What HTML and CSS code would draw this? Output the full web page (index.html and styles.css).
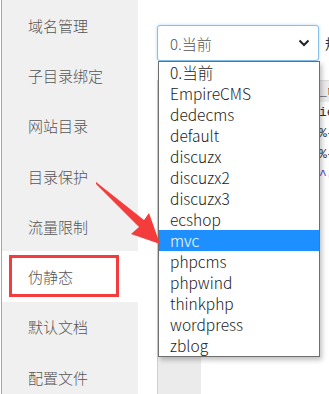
FILE: index.html
```html
<!DOCTYPE html>
<html lang="zh">
<head>
<meta charset="utf-8">
<link rel="stylesheet" href="styles.css">
</head>
<body>
<div class="page">
  <ul class="sidebar">
    <li class="nav-item">域名管理</li>
    <li class="nav-item">子目录绑定</li>
    <li class="nav-item">网站目录</li>
    <li class="nav-item">目录保护</li>
    <li class="nav-item">流量限制</li>
    <li class="nav-item active">伪静态</li>
    <li class="nav-item">默认文档</li>
    <li class="nav-item">配置文件</li>
  </ul>
  <div class="main">
    <div class="select-row">
      <div class="select">
        <span class="select-value">0.当前</span>
        <svg class="chevron" width="12" height="8" viewBox="0 0 12 8"><path d="M1.5 1.5 L6 6 L10.5 1.5" fill="none" stroke="#222" stroke-width="2"/></svg>
      </div>
      <span class="select-label">规则转换工具</span>
    </div>
    <div class="editor">
      <div class="gutter"></div>
      <div class="code">
        <div class="line current">_rewrite</div>
        <div class="line">ie</div>
        <div class="line">%{REQUEST}</div>
        <div class="line">%{HTTP}</div>
        <div class="line rx">^(.*)$</div>
      </div>
    </div>
    <ul class="dropdown">
      <li class="opt">0.当前</li>
      <li class="opt">EmpireCMS</li>
      <li class="opt">dedecms</li>
      <li class="opt">default</li>
      <li class="opt">discuzx</li>
      <li class="opt">discuzx2</li>
      <li class="opt">discuzx3</li>
      <li class="opt">ecshop</li>
      <li class="opt selected">mvc</li>
      <li class="opt">phpcms</li>
      <li class="opt">phpwind</li>
      <li class="opt">thinkphp</li>
      <li class="opt">wordpress</li>
      <li class="opt">zblog</li>
    </ul>
  </div>
  <div class="mark-box"></div>
  <svg class="arrow" width="329" height="394" viewBox="0 0 329 394">
    <polygon points="96,182 144,220 149,213 160,244 131,234 139,227 96,184" fill="#f43c3c"/>
  </svg>
</div>
</body>
</html>
```
FILE: styles.css
```css
* { box-sizing: border-box; }
html, body { margin: 0; padding: 0; background: #fff; }
body {
  width: 329px;
  height: 394px;
  overflow: hidden;
  font-family: "Noto Sans CJK SC", "Noto Sans", sans-serif;
}
.page {
  position: relative;
  display: flex;
  width: 329px;
  height: 394px;
  overflow: hidden;
}
.sidebar {
  list-style: none;
  margin: 0 0 0 1px;
  padding: 0;
  width: 137px;
  flex: none;
  background: #f0f0f0;
  border-left: 1px solid #a8a8a8;
}
.nav-item {
  height: 50.3px;
  display: flex;
  align-items: center;
  padding-left: 26px;
  font-size: 15px;
  font-weight: 300;
  color: #555;
}
.nav-item.active { background: #fff; }
.main {
  position: relative;
  flex: 1;
  padding: 25px 0 0 19px;
  min-width: 0;
}
.select-row {
  display: flex;
  align-items: center;
  white-space: nowrap;
}
.select {
  flex: none;
  width: 162px;
  height: 36px;
  border: 1px solid #86bfe9;
  border-radius: 3px;
  box-shadow: 0 0 3px rgba(102, 175, 233, 0.5);
  display: flex;
  align-items: center;
  justify-content: space-between;
  padding: 0 8px 0 12px;
  background: #fff;
}
.select-value { font-size: 15px; font-weight: 300; color: #555; }
.chevron { display: block; }
.select-label {
  margin-left: 6px;
  font-size: 14px;
  color: #333;
}
.editor {
  margin-top: 19px;
  display: flex;
  height: 320px;
  border-left: 1px solid #d0d0d0;
  border-top: 1px solid #ddd;
}
.gutter {
  width: 43px;
  flex: none;
  background: #ebebeb;
}
.code {
  flex: 1;
  min-width: 0;
  overflow: hidden;
  font-family: "Liberation Mono", monospace;
  font-size: 13px;
  color: #333;
}
.line {
  height: 21px;
  line-height: 21px;
  white-space: nowrap;
  padding-left: 118px;
}
.line.current { background: #ececec; }
.line.rx { color: #4a4ad0; }
.dropdown {
  position: absolute;
  left: 1px;
  top: 61px;
  width: 162px;
  margin: 0 0 0 19px;
  padding: 0;
  list-style: none;
  background: #fff;
  border: 1px solid #6e6e6e;
  box-shadow: 2px 3px 5px rgba(0, 0, 0, 0.25);
}
.opt {
  height: 21px;
  line-height: 21px;
  padding-left: 11px;
  font-size: 15.5px;
  font-weight: 300;
  color: #1a1a1a;
}
.opt.selected { background: #1e8fff; color: #fff; }
.mark-box {
  position: absolute;
  left: 9px;
  top: 255px;
  width: 110px;
  height: 42px;
  border: 3px solid #f43c3c;
}
.arrow {
  position: absolute;
  left: 0;
  top: 0;
  pointer-events: none;
}
```
